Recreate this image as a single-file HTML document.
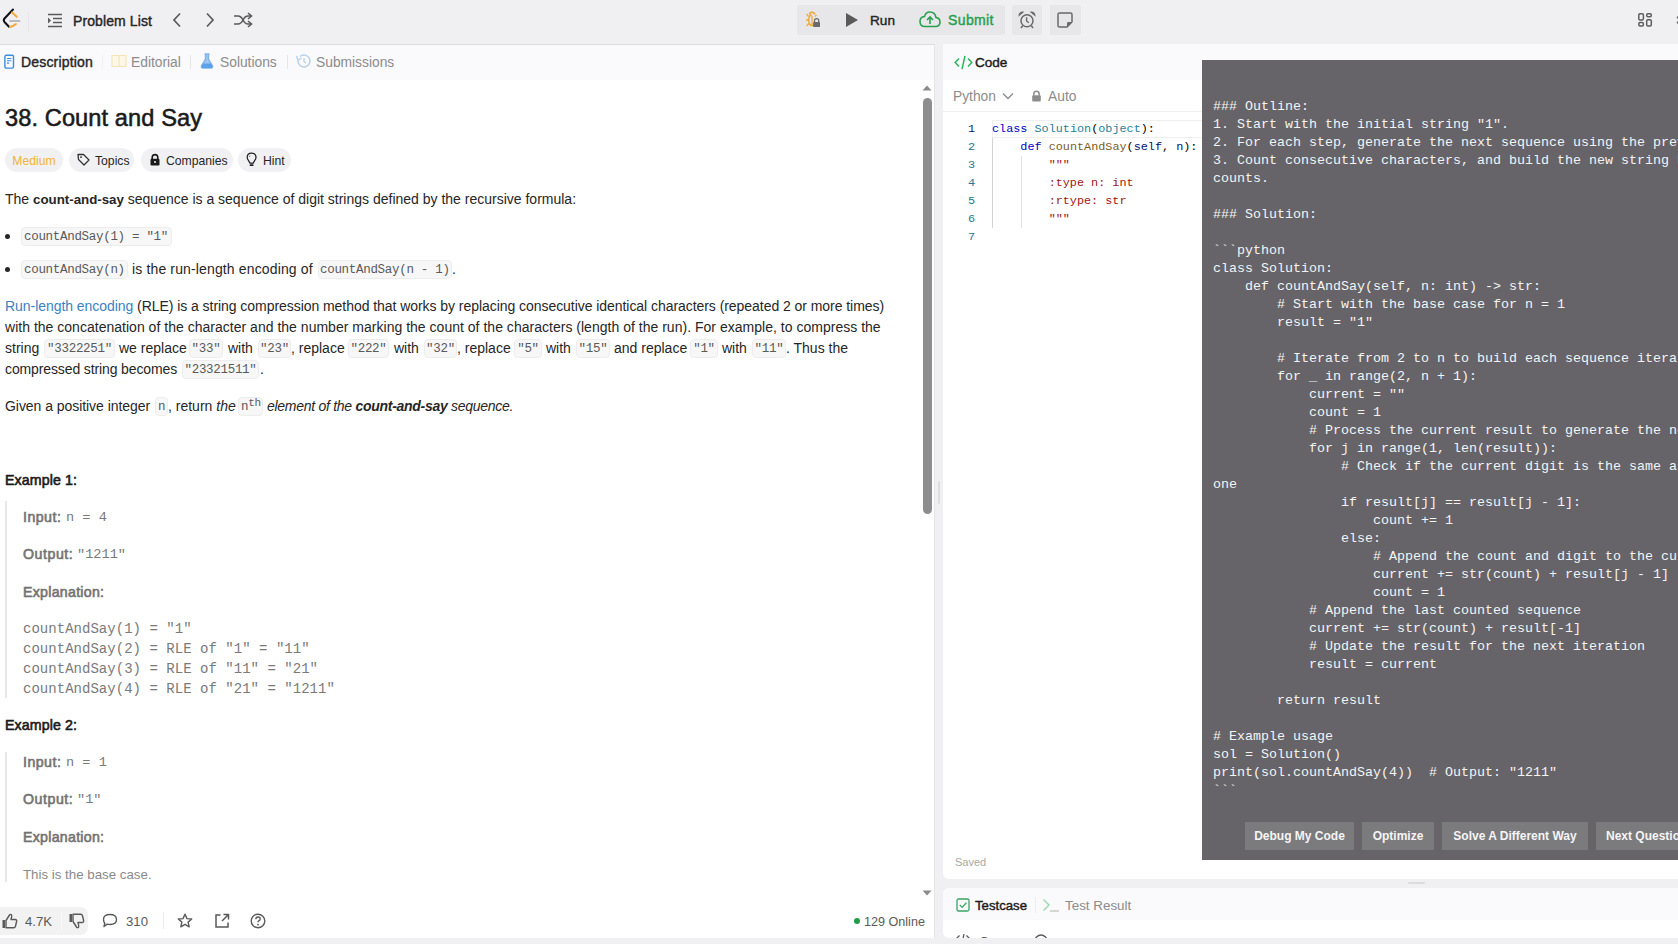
<!DOCTYPE html>
<html><head><meta charset="utf-8">
<style>
*{box-sizing:border-box;margin:0;padding:0}
html,body{width:1678px;height:944px;overflow:hidden;background:#f0eff2;font-family:"Liberation Sans",sans-serif;color:#262626}
.abs{position:absolute}
.mono{font-family:"Liberation Mono",monospace}
#top{position:absolute;left:0;top:0;width:1678px;height:44px;background:#f0eff2}
#left{position:absolute;left:0;top:44px;width:935px;height:894px;background:#fff;border-right:1px solid #e4e4e4;border-top:1px solid #dcdcdc}
#lhead{position:absolute;left:0;top:0;width:934px;height:35px;background:#faf9fb}
#right{position:absolute;left:943px;top:44px;width:735px;height:835px;background:#fff;border-radius:2px 0 0 6px}
#rhead{position:absolute;left:0;top:0;width:735px;height:36px;background:#faf9fb;border-radius:2px 0 0 0}
#tc{position:absolute;left:943px;top:888px;width:735px;height:50px;background:#fff;border-radius:6px 0 0 6px;overflow:hidden}
#ov{position:absolute;left:1202px;top:60px;width:476px;height:800px;background:#666468}
.ovtxt{position:absolute;left:11px;top:38px;font-family:"Liberation Mono",monospace;font-size:13.33px;line-height:18px;color:#f4f4f4;white-space:pre}
.btn{position:absolute;top:762px;height:28px;background:#7b7a7d;color:#f5f5f5;font-size:12px;font-weight:bold;line-height:29px;text-align:center}
.t{position:absolute;white-space:nowrap}
code,.code{font-family:"Liberation Mono",monospace;font-size:12px;background:#f2f2f2;border:1px solid #ececec;border-radius:4px;padding:1px 2px;color:#505050}
.p{position:absolute;left:5px;font-size:14px;line-height:21px;color:#262626;white-space:nowrap}
.pill{position:absolute;top:148px;height:24px;border-radius:12px;background:#f1f0f3;font-size:12.2px;line-height:26px;color:#262626}
.ln{position:absolute;left:958px;width:20px;text-align:right;font-family:"Liberation Mono",monospace;font-size:11.9px;color:#237893}
.cl{position:absolute;left:992px;font-family:"Liberation Mono",monospace;font-size:11.9px;white-space:pre;color:#000}
</style></head><body>
<div id="top"></div>
<!-- TOP BAR -->
<svg class="abs" style="left:0;top:0" width="30" height="40" viewBox="0 0 30 40">
 <path d="M13 9.5 L4.5 18.5 Q3 20.3 4.5 22 L9 26.8" fill="none" stroke="#111" stroke-width="2" stroke-linecap="round"/>
 <path d="M12 12.5 L16.8 16.8" stroke="#f2a93b" stroke-width="1.9" stroke-linecap="round"/>
 <path d="M10 21 H19.5" stroke="#a8a8a8" stroke-width="1.7" stroke-linecap="round"/>
 <path d="M10 27 Q13 26.5 16 24" fill="none" stroke="#f2a93b" stroke-width="1.9" stroke-linecap="round"/>
</svg>
<div class="abs" style="left:28px;top:12px;width:1px;height:20px;background:#e6e6e6"></div>
<svg class="abs" style="left:47px;top:13px" width="16" height="15" viewBox="0 0 16 15">
 <path d="M1 1.5H15M6 5.5H15M6 9.5H15M1 13.5H15" stroke="#5a5a5a" stroke-width="1.6"/>
 <path d="M1 4.5 L4 7.5 L1 10.5Z" fill="#5a5a5a"/>
</svg>
<div class="t" style="left:73px;top:13px;font-size:14.0px;font-weight:normal;-webkit-text-stroke:0.4px currentColor;letter-spacing:0.099px;color:#262626;line-height:17px">Problem List</div>
<svg class="abs" style="left:171px;top:12px" width="12" height="16" viewBox="0 0 12 16"><path d="M9 1.5 L3 8 L9 14.5" fill="none" stroke="#5a5a5a" stroke-width="1.7"/></svg>
<svg class="abs" style="left:204px;top:12px" width="12" height="16" viewBox="0 0 12 16"><path d="M3 1.5 L9 8 L3 14.5" fill="none" stroke="#5a5a5a" stroke-width="1.7"/></svg>
<svg class="abs" style="left:233px;top:12px" width="20" height="16" viewBox="0 0 20 16">
 <path d="M1 4 H5 Q8 4 10 8 Q12 12 15 12 H18 M1 12 H5 Q8 12 10 8 Q12 4 15 4 H18" fill="none" stroke="#5a5a5a" stroke-width="1.6"/>
 <path d="M15 1 L18.5 4 L15 7 M15 9 L18.5 12 L15 15" fill="none" stroke="#5a5a5a" stroke-width="1.6"/>
</svg>

<div class="abs" style="left:797px;top:5px;width:208px;height:30px;background:#e7e6e9;border-radius:3px"></div>


<svg class="abs" style="left:804px;top:10px" width="18" height="18" viewBox="0 0 18 18">
 <path d="M5.5 4.5 Q5.5 2.2 8 2.2 Q10.5 2.2 10.5 4.5" fill="none" stroke="#f2a93b" stroke-width="1.6"/>
 <path d="M8 5 Q4.8 5 4.8 10 Q4.8 15.5 8 15.5 Q10 15.5 10.5 13" fill="none" stroke="#f2a93b" stroke-width="1.6"/>
 <path d="M2.5 4 L4.5 6.5 M2 10 H4.5 M2.5 16 L4.8 13.5 M12.5 5 L10.8 6.5 M8 6 V15" fill="none" stroke="#f2a93b" stroke-width="1.3"/>
 <rect x="9.2" y="12" width="6.8" height="5" rx="0.6" fill="#6a6a6a"/>
 <path d="M10.5 12.2 V10.6 Q10.5 8.6 12.6 8.6 Q14.7 8.6 14.7 10.6 V12.2" fill="none" stroke="#6a6a6a" stroke-width="1.3"/>
</svg>
<svg class="abs" style="left:845px;top:12px" width="14" height="16" viewBox="0 0 14 16"><path d="M1 1 L13 8 L1 15Z" fill="#5a5a5a"/></svg>
<div class="t" style="left:870px;top:12px;font-size:13.6px;font-weight:normal;-webkit-text-stroke:0.4px currentColor;letter-spacing:0.021px;color:#262626;line-height:17px">Run</div>
<svg class="abs" style="left:919px;top:11px" width="22" height="17" viewBox="0 0 22 17">
 <path d="M6 15.5 H16.5 Q21 15.5 21 11 Q21 7 17 6.5 Q16 1 11 1 Q6.5 1 5.5 5.5 Q1 6 1 10.5 Q1 15.5 6 15.5Z" fill="none" stroke="#26a24e" stroke-width="1.6"/>
 <path d="M11 13 V6.5 M8 9 L11 6 L14 9" fill="none" stroke="#26a24e" stroke-width="1.6"/>
</svg>
<div class="t" style="left:948px;top:12px;font-size:14.0px;font-weight:normal;-webkit-text-stroke:0.4px currentColor;letter-spacing:0.387px;color:#22a04c;line-height:17px">Submit</div>
<div class="abs" style="left:1012px;top:5px;width:30px;height:30px;background:#e7e6e9;border-radius:3px"></div>
<svg class="abs" style="left:1018px;top:11px" width="18" height="18" viewBox="0 0 18 18">
 <circle cx="9" cy="9.8" r="6" fill="none" stroke="#6a6a6a" stroke-width="1.5"/>
 <path d="M8.6 6.3 V10 L10.8 11.8" fill="none" stroke="#6a6a6a" stroke-width="1.4"/>
 <path d="M1.2 4.2 Q1.8 1 4.8 1.2 Z M16.8 4.2 Q16.2 1 13.2 1.2 Z" fill="#6a6a6a" stroke="#6a6a6a" stroke-width="1.2"/>
 <path d="M4.6 14.8 L3 17 M13.4 14.8 L15 17" fill="none" stroke="#6a6a6a" stroke-width="1.5"/>
</svg>
<div class="abs" style="left:1050px;top:5px;width:31px;height:30px;background:#e7e6e9;border-radius:3px"></div>
<svg class="abs" style="left:1057px;top:12px" width="16" height="16" viewBox="0 0 16 16">
 <path d="M2.5 1 H13.5 Q15 1 15 2.5 V10 L10 15 H2.5 Q1 15 1 13.5 V2.5 Q1 1 2.5 1Z" fill="none" stroke="#6a6a6a" stroke-width="1.5"/>
 <path d="M15 10 H11.2 Q10 10 10 11.2 V15Z" fill="#6a6a6a"/>
</svg>
<svg class="abs" style="left:1630px;top:6px" width="48" height="28" viewBox="0 0 48 28">
 <rect x="8.8" y="7.7" width="4.6" height="6.3" rx="1.2" fill="none" stroke="#5f5f5f" stroke-width="1.5"/>
 <rect x="8.8" y="16.6" width="4.6" height="3.4" rx="1.2" fill="none" stroke="#5f5f5f" stroke-width="1.5"/>
 <rect x="16.7" y="7.7" width="4.6" height="3.1" rx="1.2" fill="none" stroke="#5f5f5f" stroke-width="1.5"/>
 <rect x="16.7" y="13.7" width="4.6" height="6.3" rx="1.2" fill="none" stroke="#5f5f5f" stroke-width="1.5"/>
 <circle cx="48" cy="11.5" r="1.3" fill="#6a6a6a"/><circle cx="48" cy="16.5" r="1.3" fill="#6a6a6a"/>
</svg>

<div id="left"><div id="lhead"></div></div>

<!-- LEFT PANEL CONTENT -->
<svg class="abs" style="left:4px;top:54px" width="11" height="16" viewBox="0 0 11 16">
 <rect x="0.9" y="1.3" width="8.6" height="12.8" rx="1.3" fill="none" stroke="#3b8de0" stroke-width="1.4"/>
 <path d="M3 4.5H7.3M3 6.8H7.3M3 9.1H5" stroke="#3b8de0" stroke-width="1.1"/>
</svg>
<div class="t" style="left:21px;top:54px;font-size:14.0px;font-weight:normal;-webkit-text-stroke:0.4px currentColor;letter-spacing:0.179px;color:#262626;line-height:17px">Description</div>
<div class="abs" style="left:102px;top:55px;width:1px;height:14px;background:#f0eff2"></div>
<svg class="abs" style="left:111px;top:54px" width="16" height="14" viewBox="0 0 16 14">
 <path d="M1 1.5 H7 Q8 1.5 8 2.5 V12.5 H1Z M15 1.5 H9 Q8 1.5 8 2.5 V12.5 H15Z" fill="#fcf7e8" stroke="#f3e5b5" stroke-width="1.1"/>
</svg>
<div class="t" style="left:131px;top:54px;font-size:13.8px;color:#8c8c8c;line-height:17px">Editorial</div>
<div class="abs" style="left:190px;top:55px;width:1px;height:14px;background:#e6e6e6"></div>
<svg class="abs" style="left:200px;top:53px" width="14" height="16" viewBox="0 0 14 16">
 <path d="M4.5 1 H9.5 M5.5 1.5 V6 L1.5 13 Q1 15 3 15 H11 Q13 15 12.5 13 L8.5 6 V1.5" fill="#9ec6f0" stroke="#7fb3ea" stroke-width="1.4"/>
 <path d="M3 10.5 H11 L12.5 13 Q13 15 11 15 H3 Q1 15 1.5 13Z" fill="#5da1e8"/>
</svg>
<div class="t" style="left:220px;top:54px;font-size:13.8px;color:#8c8c8c;line-height:17px">Solutions</div>
<div class="abs" style="left:287px;top:55px;width:1px;height:14px;background:#e6e6e6"></div>
<svg class="abs" style="left:295px;top:53px" width="17" height="16" viewBox="0 0 17 16">
 <path d="M3 8 A6 6 0 1 0 5 3.5" fill="none" stroke="#b9cfe6" stroke-width="1.4"/>
 <path d="M1.5 3 L3 7.5 L6.5 5" fill="none" stroke="#b9cfe6" stroke-width="1.3"/>
 <path d="M9 5 V8.5 L11 10" fill="none" stroke="#b9cfe6" stroke-width="1.3"/>
</svg>
<div class="t" style="left:316px;top:54px;font-size:13.8px;color:#8c8c8c;line-height:17px">Submissions</div>

<div class="t" style="left:5px;top:103px;font-size:23.6px;font-weight:normal;-webkit-text-stroke:0.55px #1a1a1a;color:#1a1a1a;line-height:30px;letter-spacing:0.1px">38. Count and Say</div>

<div class="pill" style="left:5px;width:58px;color:#f5b335;text-align:center">Medium</div>
<div class="pill" style="left:69px;width:65px;"><svg class="abs" style="left:8px;top:5px" width="13" height="13" viewBox="0 0 13 13"><path d="M1 1.5 H6.5 L12 7 L7 12 L1.5 6.5Z" fill="none" stroke="#333" stroke-width="1.3" stroke-linejoin="round"/><circle cx="4" cy="4.2" r="0.9" fill="#333"/></svg><span class="abs" style="left:26px">Topics</span></div>
<div class="pill" style="left:141px;width:92px;"><svg class="abs" style="left:8px;top:5px" width="12" height="13" viewBox="0 0 12 13"><path d="M3.2 6 V4.6 Q3.2 1.6 6 1.6 Q8.8 1.6 8.8 4.6 V6" fill="none" stroke="#1a1a1a" stroke-width="1.6"/><rect x="1.5" y="5.8" width="9" height="6.6" rx="1.2" fill="#1a1a1a"/><circle cx="6" cy="9.1" r="1" fill="#f1f0f3"/></svg><span class="abs" style="left:25px">Companies</span></div>
<div class="pill" style="left:238px;width:53px;"><svg class="abs" style="left:8px;top:4px" width="12" height="16" viewBox="0 0 12 16"><path d="M4 11.2 L2.6 8.6 Q1.2 7 1.2 5.6 Q1.2 1.2 5.6 1.2 Q10 1.2 10 5.6 Q10 7 8.6 8.6 L7.2 11.2Z" fill="none" stroke="#222" stroke-width="1.25" stroke-linejoin="round"/><rect x="3.7" y="12.2" width="3.8" height="1.8" rx="0.6" fill="#222"/><path d="M4 3.8 L3.4 5" stroke="#444" stroke-width="0.8"/></svg><span class="abs" style="left:25px">Hint</span></div>

<div class="p" style="top:189px">The <b style="font-size:13.3px">count-and-say</b> sequence is a sequence of digit strings defined by the recursive formula:</div>

<div class="abs" style="left:5px;top:234px;width:5px;height:5px;border-radius:50%;background:#262626"></div>
<div class="abs" style="left:21px;top:227px;width:151px;height:19px;background:#f7f7f8;border:1px solid #ededee;border-radius:4px"></div>
<div class="t mono" style="left:24px;top:229px;font-size:12.5px;letter-spacing:-0.3px;line-height:17px;color:#5a5a5a">countAndSay(1) = "1"</div>

<div class="abs" style="left:5px;top:267px;width:5px;height:5px;border-radius:50%;background:#262626"></div>
<div class="abs" style="left:21px;top:260px;width:107px;height:19px;background:#f7f7f8;border:1px solid #ededee;border-radius:4px"></div>
<div class="t mono" style="left:24px;top:262px;font-size:12.5px;letter-spacing:-0.3px;line-height:17px;color:#5a5a5a">countAndSay(n)</div>
<div class="p" style="top:259px;left:132px;letter-spacing:0.14px">is the run-length encoding of</div>
<div class="abs" style="left:318px;top:260px;width:134px;height:19px;background:#f7f7f8;border:1px solid #ededee;border-radius:4px"></div>
<div class="t mono" style="left:320px;top:262px;font-size:12.5px;letter-spacing:-0.3px;line-height:17px;color:#5a5a5a">countAndSay(n - 1)</div>
<div class="p" style="top:259px;left:452px">.</div>

<div class="p" style="top:296px;letter-spacing:-0.052px"><span style="color:#3b82c4">Run-length encoding</span> (RLE) is a string compression method that works by replacing consecutive identical characters (repeated 2 or more times)</div>
<div class="p" style="top:317px;letter-spacing:0.018px">with the concatenation of the character and the number marking the count of the characters (length of the run). For example, to compress the</div>
<div class="p" style="top:338px">string</div>
<div class="p" style="top:359px;letter-spacing:-0.12px">compressed string becomes</div>
<div class="p" style="top:338px;left:119px;">we replace</div>
<div class="abs" style="left:44px;top:339px;width:71px;height:19px;background:#f7f7f8;border:1px solid #ededee;border-radius:4px"></div><div class="t mono" style="left:44px;width:71px;text-align:center;top:341px;font-size:12.5px;letter-spacing:-0.3px;line-height:17px;color:#5a5a5a">"3322251"</div>
<div class="abs" style="left:189px;top:339px;width:34px;height:19px;background:#f7f7f8;border:1px solid #ededee;border-radius:4px"></div><div class="t mono" style="left:189px;width:34px;text-align:center;top:341px;font-size:12.5px;letter-spacing:-0.3px;line-height:17px;color:#5a5a5a">"33"</div>
<div class="p" style="top:338px;left:228px;">with</div>
<div class="abs" style="left:258px;top:339px;width:33px;height:19px;background:#f7f7f8;border:1px solid #ededee;border-radius:4px"></div><div class="t mono" style="left:258px;width:33px;text-align:center;top:341px;font-size:12.5px;letter-spacing:-0.3px;line-height:17px;color:#5a5a5a">"23"</div>
<div class="p" style="top:338px;left:291px;">, replace</div>
<div class="abs" style="left:348px;top:339px;width:41px;height:19px;background:#f7f7f8;border:1px solid #ededee;border-radius:4px"></div><div class="t mono" style="left:348px;width:41px;text-align:center;top:341px;font-size:12.5px;letter-spacing:-0.3px;line-height:17px;color:#5a5a5a">"222"</div>
<div class="p" style="top:338px;left:394px;">with</div>
<div class="abs" style="left:424px;top:339px;width:33px;height:19px;background:#f7f7f8;border:1px solid #ededee;border-radius:4px"></div><div class="t mono" style="left:424px;width:33px;text-align:center;top:341px;font-size:12.5px;letter-spacing:-0.3px;line-height:17px;color:#5a5a5a">"32"</div>
<div class="p" style="top:338px;left:457px;">, replace</div>
<div class="abs" style="left:514px;top:339px;width:28px;height:19px;background:#f7f7f8;border:1px solid #ededee;border-radius:4px"></div><div class="t mono" style="left:514px;width:28px;text-align:center;top:341px;font-size:12.5px;letter-spacing:-0.3px;line-height:17px;color:#5a5a5a">"5"</div>
<div class="p" style="top:338px;left:546px;">with</div>
<div class="abs" style="left:576px;top:339px;width:34px;height:19px;background:#f7f7f8;border:1px solid #ededee;border-radius:4px"></div><div class="t mono" style="left:576px;width:34px;text-align:center;top:341px;font-size:12.5px;letter-spacing:-0.3px;line-height:17px;color:#5a5a5a">"15"</div>
<div class="p" style="top:338px;left:614px;">and replace</div>
<div class="abs" style="left:690px;top:339px;width:28px;height:19px;background:#f7f7f8;border:1px solid #ededee;border-radius:4px"></div><div class="t mono" style="left:690px;width:28px;text-align:center;top:341px;font-size:12.5px;letter-spacing:-0.3px;line-height:17px;color:#5a5a5a">"1"</div>
<div class="p" style="top:338px;left:722px;">with</div>
<div class="abs" style="left:752px;top:339px;width:34px;height:19px;background:#f7f7f8;border:1px solid #ededee;border-radius:4px"></div><div class="t mono" style="left:752px;width:34px;text-align:center;top:341px;font-size:12.5px;letter-spacing:-0.3px;line-height:17px;color:#5a5a5a">"11"</div>
<div class="p" style="top:338px;left:786px;">. Thus the</div>
<div class="abs" style="left:182px;top:360px;width:77px;height:19px;background:#f7f7f8;border:1px solid #ededee;border-radius:4px"></div><div class="t mono" style="left:182px;width:77px;text-align:center;top:362px;font-size:12.5px;letter-spacing:-0.3px;line-height:17px;color:#5a5a5a">"23321511"</div>
<div class="p" style="top:359px;left:260px;">.</div>
<div class="p" style="top:396px;left:5px;letter-spacing:-0.05px">Given a positive integer</div>
<div class="abs" style="left:155px;top:397px;width:13px;height:19px;background:#f7f7f8;border:1px solid #ededee;border-radius:4px"></div><div class="t mono" style="left:155px;width:13px;text-align:center;top:399px;font-size:12.5px;letter-spacing:-0.3px;line-height:17px;color:#5a5a5a">n</div>
<div class="p" style="top:396px;left:168px;">, return <i>the</i></div>
<div class="abs" style="left:238px;top:397px;width:25px;height:19px;background:#f7f7f8;border:1px solid #ededee;border-radius:4px"></div><div class="t mono" style="left:241px;top:399px;font-size:12.5px;letter-spacing:-0.3px;line-height:17px;color:#5a5a5a">n<span style="font-size:11px;position:relative;top:-4px;letter-spacing:-0.2px">th</span></div>
<div class="p" style="top:396px;left:267px;letter-spacing:-0.28px"><i>element of the <b>count-and-say</b> sequence.</i></div>
<div class="t" style="left:5px;top:471px;font-size:14.2px;font-weight:normal;-webkit-text-stroke:0.6px currentColor;letter-spacing:0.102px;color:#1a1a1a;line-height:18px">Example 1:</div>
<div class="abs" style="left:5px;top:501px;width:2px;height:197px;background:#e8e8e8"></div>
<div class="t" style="left:23px;top:508px;font-size:14.2px;font-weight:normal;-webkit-text-stroke:0.6px currentColor;letter-spacing:0.467px;color:#737373;line-height:18px">Input:</div><div class="t mono" style="left:66px;top:509px;font-size:13.6px;line-height:18px;color:#7a7a7a">n = 4</div>
<div class="t" style="left:23px;top:545px;font-size:14.2px;font-weight:normal;-webkit-text-stroke:0.6px currentColor;letter-spacing:0.536px;color:#737373;line-height:18px">Output:</div><div class="t mono" style="left:77px;top:546px;font-size:13.6px;line-height:18px;color:#7a7a7a">"1211"</div>
<div class="t" style="left:23px;top:583px;font-size:14.2px;font-weight:normal;-webkit-text-stroke:0.6px currentColor;letter-spacing:0.267px;color:#737373;line-height:18px">Explanation:</div>
<div class="t mono" style="left:23px;top:619px;font-size:14.05px;line-height:20px;color:#7a7a7a;white-space:pre">countAndSay(1) = "1"
countAndSay(2) = RLE of "1" = "11"
countAndSay(3) = RLE of "11" = "21"
countAndSay(4) = RLE of "21" = "1211"</div>
<div class="t" style="left:5px;top:716px;font-size:14.2px;font-weight:normal;-webkit-text-stroke:0.6px currentColor;letter-spacing:0.102px;color:#1a1a1a;line-height:18px">Example 2:</div>
<div class="abs" style="left:5px;top:752px;width:2px;height:130px;background:#e8e8e8"></div>
<div class="t" style="left:23px;top:753px;font-size:14.2px;font-weight:normal;-webkit-text-stroke:0.6px currentColor;letter-spacing:0.467px;color:#737373;line-height:18px">Input:</div><div class="t mono" style="left:66px;top:754px;font-size:13.6px;line-height:18px;color:#7a7a7a">n = 1</div>
<div class="t" style="left:23px;top:790px;font-size:14.2px;font-weight:normal;-webkit-text-stroke:0.6px currentColor;letter-spacing:0.536px;color:#737373;line-height:18px">Output:</div><div class="t mono" style="left:77px;top:791px;font-size:13.6px;line-height:18px;color:#7a7a7a">"1"</div>
<div class="t" style="left:23px;top:828px;font-size:14.2px;font-weight:normal;-webkit-text-stroke:0.6px currentColor;letter-spacing:0.267px;color:#737373;line-height:18px">Explanation:</div>
<div class="t" style="left:23px;top:865px;font-size:13.3px;line-height:20px;color:#8a8a8a">This is the base case.</div>
<svg class="abs" style="left:922px;top:85px" width="10" height="6" viewBox="0 0 10 6"><path d="M0.5 5.5 L5 0.5 L9.5 5.5Z" fill="#8c8c8c"/></svg>
<div class="abs" style="left:923px;top:98px;width:9px;height:416px;border-radius:4.5px;background:#8d8c8f"></div>
<svg class="abs" style="left:922px;top:890px" width="10" height="6" viewBox="0 0 10 6"><path d="M0.5 0.5 L5 5.5 L9.5 0.5Z" fill="#8c8c8c"/></svg>
<div class="abs" style="left:0;top:907px;width:88px;height:28px;background:#f2f2f2;border-radius:0 8px 8px 0"></div>
<div class="abs" style="left:61px;top:912px;width:1px;height:18px;background:#fafafa"></div>
<svg class="abs" style="left:1px;top:913px" width="17" height="16" viewBox="0 0 17 16"><path d="M1.5 7 H4 V15 H1.5Z" fill="#5a5a5a"/><path d="M5 7.5 L8.5 2 Q9.5 0.8 10.5 1.8 Q11 2.5 10.6 3.8 L10 6.5 H14.3 Q16 6.8 15.6 8.5 L14.4 13.5 Q14 14.8 12.7 14.8 H5Z" fill="none" stroke="#5a5a5a" stroke-width="1.4" stroke-linejoin="round"/></svg>
<div class="t" style="left:25px;top:913px;font-size:13.2px;color:#5a5a5a;line-height:17px">4.7K</div>
<svg class="abs" style="left:68px;top:913px" width="17" height="16" viewBox="0 0 17 16"><path d="M1.5 1 H4 V9 H1.5Z" fill="#5a5a5a"/><path d="M5 8.5 L8.5 14 Q9.5 15.2 10.5 14.2 Q11 13.5 10.6 12.2 L10 9.5 H14.3 Q16 9.2 15.6 7.5 L14.4 2.5 Q14 1.2 12.7 1.2 H5Z" fill="none" stroke="#5a5a5a" stroke-width="1.4" stroke-linejoin="round"/></svg>
<svg class="abs" style="left:102px;top:913px" width="16" height="15" viewBox="0 0 16 15"><path d="M8 1.5 Q14.5 1.5 14.5 6.5 Q14.5 11.5 8 11.5 Q6.5 11.5 5.3 11.1 L2 13.5 L2.8 10.2 Q1.5 8.8 1.5 6.5 Q1.5 1.5 8 1.5Z" fill="none" stroke="#5a5a5a" stroke-width="1.4" stroke-linejoin="round"/></svg>
<div class="t" style="left:126px;top:913px;font-size:13.2px;color:#5a5a5a;line-height:17px">310</div>
<div class="abs" style="left:163px;top:912px;width:1px;height:17px;background:#ececec"></div>
<svg class="abs" style="left:177px;top:913px" width="16" height="15" viewBox="0 0 16 15"><path d="M8 1.2 L10 5.6 L14.7 6 L11.1 9.1 L12.2 13.8 L8 11.3 L3.8 13.8 L4.9 9.1 L1.3 6 L6 5.6Z" fill="none" stroke="#5a5a5a" stroke-width="1.4" stroke-linejoin="round"/></svg>
<svg class="abs" style="left:214px;top:913px" width="16" height="16" viewBox="0 0 16 16"><path d="M6.5 2 H2 V14 H14 V9.5" fill="none" stroke="#5a5a5a" stroke-width="1.5"/><path d="M8 8 L14.5 1.5 M9.5 1.5 H14.5 V6.5" fill="none" stroke="#5a5a5a" stroke-width="1.5"/></svg>
<svg class="abs" style="left:250px;top:913px" width="16" height="16" viewBox="0 0 16 16"><circle cx="8" cy="8" r="6.8" fill="none" stroke="#5a5a5a" stroke-width="1.4"/><path d="M5.8 6.2 Q5.8 4 8 4 Q10.2 4 10.2 6 Q10.2 7.2 8.7 7.9 Q8 8.3 8 9.3" fill="none" stroke="#5a5a5a" stroke-width="1.4"/><circle cx="8" cy="11.6" r="0.9" fill="#5a5a5a"/></svg>
<div class="abs" style="left:854px;top:918px;width:6px;height:6px;border-radius:50%;background:#1f9e45"></div>
<div class="t" style="left:864px;top:914px;font-size:12.6px;color:#5a5a5a;line-height:17px">129 Online</div>
<div class="abs" style="left:938px;top:481px;width:2px;height:23px;border-radius:1px;background:#dedde0"></div>
<div id="right"><div id="rhead"></div></div>
<div id="tc"><div class="abs" style="left:0;top:0;width:735px;height:32px;background:#faf9fb"></div>
<svg class="abs" style="left:12px;top:46px" width="16" height="12" viewBox="0 0 16 12"><path d="M4.5 1.5 L1 5 L4.5 8.5 M11.5 1.5 L15 5 L11.5 8.5 M9 0 L7 10" fill="none" stroke="#5a5a5a" stroke-width="1.3"/></svg>
<div class="t" style="left:36px;top:45px;font-size:13.5px;color:#5a5a5a;line-height:17px">Case</div>
<svg class="abs" style="left:91px;top:46px" width="14" height="14" viewBox="0 0 14 14"><circle cx="7" cy="7" r="6" fill="none" stroke="#5a5a5a" stroke-width="1.3"/></svg>
</div>
<div class="abs" style="left:1408px;top:882px;width:17px;height:2px;border-radius:1px;background:#dcdcdc"></div>

<!-- RIGHT PANEL -->
<svg class="abs" style="left:954px;top:55px" width="19" height="15" viewBox="0 0 19 15"><path d="M5 3.5 L1.2 7.5 L5 11.5 M14 3.5 L17.8 7.5 L14 11.5 M11 0.8 L8 14.2" fill="none" stroke="#2cb55d" stroke-width="1.5"/></svg>
<div class="t" style="left:975px;top:54px;font-size:13.55px;font-weight:normal;-webkit-text-stroke:0.4px currentColor;letter-spacing:0.002px;color:#1a1a1a;line-height:17px">Code</div>
<div class="t" style="left:953px;top:88px;font-size:13.8px;color:#8c8c8c;line-height:17px">Python</div>
<svg class="abs" style="left:1002px;top:92px" width="12" height="8" viewBox="0 0 12 8"><path d="M1 1.5 L6 6.5 L11 1.5" fill="none" stroke="#8c8c8c" stroke-width="1.4"/></svg>
<svg class="abs" style="left:1031px;top:90px" width="11" height="12" viewBox="0 0 11 12"><path d="M2.8 5.5 V4 Q2.8 1.2 5.5 1.2 Q8.2 1.2 8.2 4 V5.5" fill="none" stroke="#8c8c8c" stroke-width="1.5"/><rect x="1.2" y="5.3" width="8.6" height="6.2" rx="1" fill="#8c8c8c"/></svg>
<div class="t" style="left:1048px;top:88px;font-size:13.8px;color:#8c8c8c;line-height:17px">Auto</div>
<div class="abs" style="left:943px;top:111px;width:735px;height:1px;background:#f0f0f0"></div>
<div class="abs" style="left:992px;top:120px;width:686px;height:18px;border:1px solid #efefef;border-right:none"></div>
<div class="abs" style="left:992px;top:138px;width:1px;height:90px;background:#d4d4d4"></div>
<div class="abs" style="left:1021px;top:156px;width:1px;height:72px;background:#e2e2e2"></div>
<div class="abs mono" style="left:955px;top:120px;width:20px;text-align:right;font-size:11.8px;line-height:18px;color:#237893;white-space:pre"><span style="color:#0b216f">1</span>
2
3
4
5
6
7</div>
<div class="abs mono" style="left:992px;top:120px;font-size:11.8px;line-height:18px;color:#000;white-space:pre"><span style="color:#0000cc">class</span> <span style="color:#267f99">Solution</span>(<span style="color:#267f99">object</span>):
    <span style="color:#0000cc">def</span> <span style="color:#795e26">countAndSay</span>(<span style="color:#001080">self</span>, <span style="color:#001080">n</span>):
<span style="color:#a31515">        """
        :type n: int
        :rtype: str
        """</span>
</div>
<div class="t" style="left:955px;top:855px;font-size:11px;color:#a8a8a8;line-height:15px">Saved</div>
<svg class="abs" style="left:956px;top:898px" width="14" height="14" viewBox="0 0 14 14"><rect x="1" y="1" width="12" height="12" rx="1.5" fill="none" stroke="#3aa564" stroke-width="1.3"/><path d="M3.8 7 L6.2 9.4 L10.4 4.8" fill="none" stroke="#3aa564" stroke-width="1.3"/></svg>
<div class="t" style="left:975px;top:897px;font-size:13.2px;font-weight:normal;-webkit-text-stroke:0.4px currentColor;letter-spacing:-0.006px;color:#1a1a1a;line-height:17px">Testcase</div>
<div class="abs" style="left:1035px;top:897px;width:1px;height:16px;background:#ececec"></div>
<svg class="abs" style="left:1042px;top:898px" width="18" height="14" viewBox="0 0 18 14"><path d="M1.5 1.5 L7 7 L1.5 12.5" fill="none" stroke="#9ad7ac" stroke-width="1.4"/><path d="M8 13 H17" stroke="#c8c8c8" stroke-width="1.4"/></svg>
<div class="t" style="left:1065px;top:897px;font-size:13.4px;color:#8c8c8c;line-height:17px">Test Result</div>
<div id="ov"><div class="ovtxt">### Outline:
1. Start with the initial string "1".
2. For each step, generate the next sequence using the previous one.
3. Count consecutive characters, and build the new string based on these
counts.

### Solution:

```python
class Solution:
    def countAndSay(self, n: int) -> str:
        # Start with the base case for n = 1
        result = "1"

        # Iterate from 2 to n to build each sequence iteratively
        for _ in range(2, n + 1):
            current = ""
            count = 1
            # Process the current result to generate the next sequence
            for j in range(1, len(result)):
                # Check if the current digit is the same as the previous
one
                if result[j] == result[j - 1]:
                    count += 1
                else:
                    # Append the count and digit to the current string
                    current += str(count) + result[j - 1]
                    count = 1
            # Append the last counted sequence
            current += str(count) + result[-1]
            # Update the result for the next iteration
            result = current

        return result

# Example usage
sol = Solution()
print(sol.countAndSay(4))  # Output: "1211"
```</div>
<div class="btn" style="left:43px;width:109px">Debug My Code</div>
<div class="btn" style="left:160px;width:72px">Optimize</div>
<div class="btn" style="left:240px;width:146px">Solve A Different Way</div>
<div class="btn" style="left:394px;width:120px;text-align:left;padding-left:10px">Next Question</div>
</div>
</body></html>
